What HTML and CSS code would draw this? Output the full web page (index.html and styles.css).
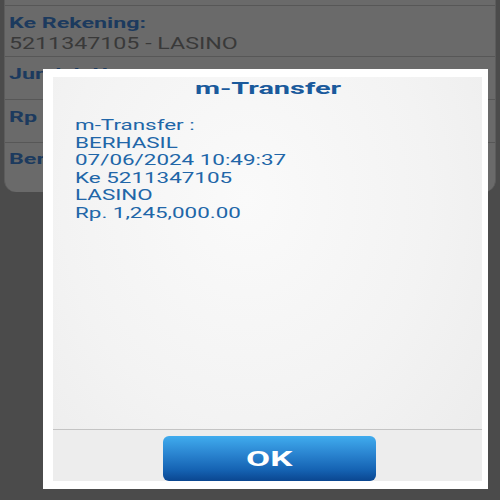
FILE: index.html
```html
<!DOCTYPE html>
<html>
<head>
<meta charset="utf-8">
<link rel="stylesheet" href="styles.css">
</head>
<body>
<div class="screen">
  <div class="form">
    <div class="strip"></div>
    <div class="row row-first">
      <div class="label"><span class="sx sx-label">Ke Rekening:</span></div>
      <div class="value"><span class="sx">5211347105 - LASINO</span></div>
    </div>
    <div class="row row-mid">
      <div class="label"><span class="sx sx-label">Jumlah Uang:</span></div>
    </div>
    <div class="row row-mid">
      <div class="label"><span class="sx sx-label">Rp</span></div>
    </div>
    <div class="row row-last">
      <div class="label"><span class="sx sx-label">Berita:</span></div>
    </div>
  </div>

  <div class="dialog">
    <div class="panel">
      <div class="title"><span class="sx-c">m-Transfer</span></div>
      <div class="message">
        <div class="line"><span class="sx sx-msg">m-Transfer :</span></div>
        <div class="line"><span class="sx sx-msg">BERHASIL</span></div>
        <div class="line"><span class="sx sx-msg">07/06/2024 10:49:37</span></div>
        <div class="line"><span class="sx sx-msg">Ke 5211347105</span></div>
        <div class="line"><span class="sx sx-msg">LASINO</span></div>
        <div class="line"><span class="sx sx-msg">Rp. 1,245,000.00</span></div>
      </div>
      <div class="footer">
        <div class="ok"><span class="sx-c sx-ok">OK</span></div>
      </div>
    </div>
  </div>
</div>
</body>
</html>
```

FILE: styles.css
```css
html, body {
  margin: 0;
  padding: 0;
}
body {
  width: 500px;
  height: 500px;
  overflow: hidden;
  background: #4b4b4b;
  font-family: Roboto, "Liberation Sans", sans-serif;
}
.screen {
  position: relative;
  width: 500px;
  height: 500px;
}
.sx {
  display: inline-block;
  white-space: nowrap;
  transform: scaleX(1.45);
  transform-origin: left center;
}
.sx-label {
  transform: scaleX(1.55);
}
.sx-msg {
  transform: scaleX(1.6);
}
.sx-c {
  display: inline-block;
  white-space: nowrap;
  transform: scaleX(1.7);
  transform-origin: center center;
}
.sx-ok {
  transform: scaleX(1.75);
}
.form {
  margin: 0 4px;
  background: #6a6a6a;
  border-radius: 0 0 12px 12px;
  border-left: 1px solid #5c5c5c;
  border-right: 1px solid #5c5c5c;
}
.strip {
  height: 5px;
  border-bottom: 1px solid #575757;
}
.row {
  box-sizing: border-box;
  padding-left: 4px;
  border-bottom: 1px solid #575757;
}
.row-first {
  height: 51px;
  padding-top: 7px;
}
.row-mid {
  height: 43px;
  padding-top: 7px;
}
.row-last {
  height: 49px;
  padding-top: 6px;
  border-bottom: none;
}
.label {
  font-size: 15px;
  font-weight: bold;
  line-height: 20px;
  color: #1c3a5e;
}
.value {
  font-size: 16px;
  line-height: 21px;
  color: #393939;
}
.dialog {
  position: absolute;
  left: 43px;
  top: 69px;
  width: 445px;
  height: 420px;
  box-sizing: border-box;
  background: #ffffff;
  padding: 8px 6px 8px 10px;
}
.panel {
  height: 100%;
  display: flex;
  flex-direction: column;
  background: radial-gradient(ellipse at 45% 30%, #fafafa 0%, #f3f3f3 55%, #ebebeb 100%);
}
.title {
  text-align: center;
  font-size: 17px;
  font-weight: bold;
  line-height: 22px;
  color: #1a5a9c;
}
.message {
  margin-top: 18px;
  padding-left: 22px;
  font-size: 14px;
  line-height: 17.6px;
  color: #2166a8;
  flex: 1;
}
.footer {
  height: 52px;
  box-sizing: border-box;
  padding-top: 6px;
  border-top: 1px solid #c4c4c4;
  background: #ededed;
  display: flex;
  justify-content: center;
}
.ok {
  width: 213px;
  height: 45px;
  box-sizing: border-box;
  border-radius: 6px;
  background: linear-gradient(to bottom, #40acee 0%, #2a84d0 40%, #1563b3 75%, #0a4690 100%);
  color: #ffffff;
  font-size: 20px;
  font-weight: bold;
  display: flex;
  align-items: center;
  justify-content: center;
  margin-left: 3px;
}
```
